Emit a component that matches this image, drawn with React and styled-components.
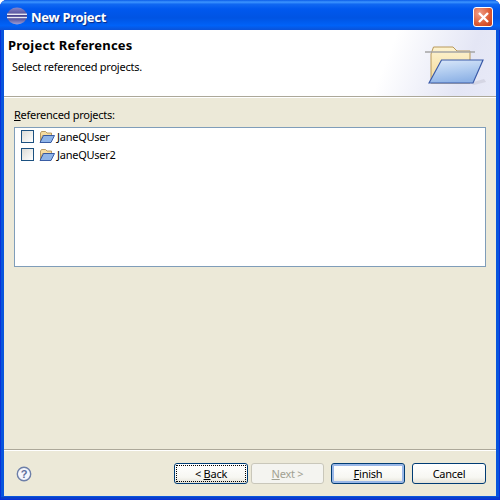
import React from "react";
import styled, { createGlobalStyle } from "styled-components";

const Global = createGlobalStyle`
  html, body { margin: 0; padding: 0; background: #fff; }
  #root { width: 500px; height: 500px; }
`;

const Window = styled.div`
  width: 500px; height: 500px; box-sizing: border-box;
  display: flex; flex-direction: column; overflow: hidden;
  border-radius: 7px 7px 0 0;
  background: #0855dd;
  box-shadow: inset 1px 0 0 #0831d9, inset -1px 0 0 #0831d9, inset 0 -1px 0 #0831d9, inset 0 -3px 0 #0a3ecb;
  font-family: "Noto Sans", Tahoma, sans-serif;
  font-size: 11px; letter-spacing: -0.25px; color: #000;
`;

const TitleBar = styled.div`
  height: 30px; flex: none; display: flex; align-items: center;
  padding: 4px 7px 0 7px; box-sizing: border-box; gap: 4px;
  background: linear-gradient(180deg, #0a5ce8 0%, #3d95ff 7%, #1068f2 14%, #0058ee 30%, #0054e3 60%, #0062f8 85%, #0a52d8 100%);
`;

const LogoSlot = styled.div` line-height: 0; margin-bottom: 3px; `;

const TitleText = styled.div`
  flex: 1; color: #fff; font: bold 13px "Noto Sans", Tahoma, sans-serif;
  text-shadow: 1px 1px 1px #0a2a80; letter-spacing: -0.3px;
`;

const CloseButton = styled.div`
  width: 20px; height: 20px; border: 1px solid #fff; border-radius: 3px; box-sizing: border-box;
  background: radial-gradient(circle at 30% 30%, #f0a08a, #dc5a33 60%, #c23a1a);
  display: flex; align-items: center; justify-content: center;
`;

const Client = styled.div`
  flex: 1; margin: 0 4px 4px 4px; background: #ece9d8; display: flex; flex-direction: column; min-height: 0;
`;

const Banner = styled.div`
  height: 67px; flex: none; box-sizing: border-box;
  background: linear-gradient(112deg, #fff 76%, #e4e6f5 92%, #e8eaf7 100%);
  border-bottom: 1px solid #aca899; display: flex; justify-content: space-between;
  padding: 7px 10px 0 4px;
`;

const BannerTitle = styled.div`
  font: bold 13px/17px "Noto Sans", Tahoma, sans-serif; letter-spacing: 0.2px;
`;

const BannerSub = styled.div`
  margin: 5px 0 0 4px; line-height: 15px; font-size: 11px;
`;

const FolderSlot = styled.div` margin-top: 9px; line-height: 0; `;

const Main = styled.div`
  flex: 1; border-top: 1px solid #fff; padding: 9px 10px 0 10px; display: flex; flex-direction: column;
`;

const Label = styled.div` line-height: 15px; height: 19px; `;
const Key = styled.span` text-decoration: underline; `;

const ListBox = styled.div`
  height: 140px; box-sizing: border-box; background: #fff; border: 1px solid #7f9db9;
  padding: 0 0 0 6px; margin-top: 1px;
`;

const Row = styled.div`
  height: 18px; box-sizing: border-box; padding-bottom: 1px; display: flex; align-items: center;
`;

const Check = styled.div`
  width: 13px; height: 13px; box-sizing: border-box; border: 1px solid #1c5180;
  background: linear-gradient(135deg, #dcdcd7, #fff); margin-right: 5px;
`;

const RowText = styled.span` margin-left: 2px; `;

const Footer = styled.div`
  height: 47px; flex: none; box-sizing: border-box; border-top: 1px solid #aca899;
  box-shadow: inset 0 1px 0 #fff; display: flex; align-items: center; padding: 1px 10px 0 12px;
`;

const Help = styled.div` flex: 1; display: flex; `;

const Button = styled.div`
  width: ${p => p.$w}px; height: 21px; box-sizing: border-box; margin-left: ${p => p.$gap}px;
  display: flex; align-items: center; justify-content: center; position: relative;
  border: 1px solid ${p => p.$disabled ? "#c9c7ba" : "#003c74"}; border-radius: 3px;
  color: ${p => p.$disabled ? "#a1a192" : "#000"};
  background: ${p => p.$disabled ? "#f4f4f0" : "linear-gradient(180deg, #fff 0%, #f7f7f2 70%, #e4e2d8 100%)"};
  box-shadow: ${p => p.$def ? "inset 0 0 0 2px #9ab8e8" : "none"};
`;

const Focus = styled.div`
  position: absolute; inset: 1px; border: 1px dotted #000;
`;

const Eclipse = () => (
  <svg width="20" height="18" viewBox="0 0 20 18">
    <defs>
      <linearGradient id="ec" x1="0" y1="0" x2="0" y2="1">
        <stop offset="0" stopColor="#8886c8" /><stop offset="0.55" stopColor="#3e3a88" /><stop offset="1" stopColor="#a0a0d8" />
      </linearGradient>
    </defs>
    <ellipse cx="10" cy="9" rx="10" ry="8.5" fill="url(#ec)" />
    <rect x="0" y="6.6" width="20" height="1.4" fill="#e8e8f4" />
    <rect x="0" y="9.8" width="20" height="1.4" fill="#e8e8f4" />
  </svg>
);

const SmallFolder = () => (
  <svg width="16" height="16" viewBox="0 0 16 16">
    <path d="M1.5 12.5 V4 l1-1.5 h4 l1.5 1.5 h4.5 v2.5 h-9 z" fill="#f6dca0" stroke="#a8864a" strokeWidth="0.8" />
    <path d="M1 13.5 L4.5 6.5 H15.5 L12 13.5 Z" fill="#8fb4e8" stroke="#2a4f9c" strokeWidth="0.9" />
  </svg>
);

const BigFolder = () => (
  <svg width="62" height="40" viewBox="0 0 62 40">
    <defs>
      <linearGradient id="bf" x1="0" y1="0" x2="0.3" y2="1">
        <stop offset="0" stopColor="#dce9fa" /><stop offset="0.5" stopColor="#b5cff1" /><stop offset="1" stopColor="#8fb3e6" />
      </linearGradient>
      <linearGradient id="bb" x1="0" y1="0" x2="0" y2="1">
        <stop offset="0" stopColor="#fdf3d0" /><stop offset="1" stopColor="#f3d998" />
      </linearGradient>
    </defs>
    <path d="M46 37 L60 33 L62 36 L50 39 Z" fill="#c9c9d8" opacity="0.6" />
    <path d="M7 37 V8 L9.5 1 H29 L33 5 H46 V37 Z" fill="url(#bb)" stroke="#b8985a" />
    <path d="M1 6 H51" stroke="#a4a4a4" strokeWidth="1.6" />
    <path d="M5 37 L17.5 14 H59 L49 37 Z" fill="url(#bf)" stroke="#3a5aa8" strokeWidth="1.2" />
  </svg>
);

const HelpIcon = () => (
  <svg width="16" height="16" viewBox="0 0 16 16">
    <circle cx="8" cy="8" r="6.7" fill="#f4f6fb" stroke="#6d7fa8" strokeWidth="1.4" />
    <text x="8" y="12" textAnchor="middle" fontSize="11" fontWeight="bold" fontFamily="Liberation Sans" fill="#5c6f9c">?</text>
  </svg>
);

export default function App() {
  return (
    <Window>
      <Global />
      <TitleBar>
        <LogoSlot><Eclipse /></LogoSlot>
        <TitleText>New Project</TitleText>
        <CloseButton>
          <svg width="13" height="13" viewBox="0 0 13 13">
            <path d="M2 2 L11 11 M11 2 L2 11" stroke="#fff" strokeWidth="2.4" />
          </svg>
        </CloseButton>
      </TitleBar>
      <Client>
        <Banner>
          <div>
            <BannerTitle>Project References</BannerTitle>
            <BannerSub>Select referenced projects.</BannerSub>
          </div>
          <FolderSlot><BigFolder /></FolderSlot>
        </Banner>
        <Main>
          <Label><Key>R</Key>eferenced projects:</Label>
          <ListBox>
            {["JaneQUser", "JaneQUser2"].map(n => (
              <Row key={n}><Check /><SmallFolder /><RowText>{n}</RowText></Row>
            ))}
          </ListBox>
        </Main>
        <Footer>
          <Help><HelpIcon /></Help>
          <Button $w={74} $gap={0}><Focus />&lt;&nbsp;<Key>B</Key>ack</Button>
          <Button $w={73} $gap={3} $disabled><Key>N</Key>ext &gt;</Button>
          <Button $w={74} $gap={7} $def><Key>F</Key>inish</Button>
          <Button $w={74} $gap={7}>Cancel</Button>
        </Footer>
      </Client>
    </Window>
  );
}
